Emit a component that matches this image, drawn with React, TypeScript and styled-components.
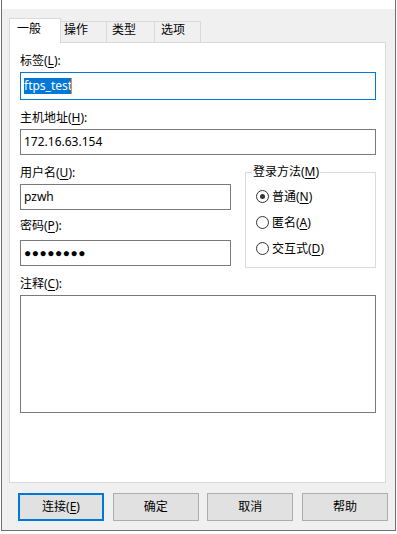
import React from "react";
import styled, { createGlobalStyle } from "styled-components";

const Global = createGlobalStyle`
  html, body { margin: 0; padding: 0; background: #ffffff; }
  body {
    font-family: "Noto Sans", "Noto Sans CJK SC", sans-serif;
    font-size: 12px;
    color: #000000;
  }
  * { box-sizing: border-box; }
  u { text-underline-offset: 2px; }
`;

const Window = styled.div`
  width: 395px;
  height: 531px;
  margin-left: 1px;
  border: 1px solid #6f6f6f;
  border-top: none;
  display: flex;
  flex-direction: column;
`;

const TitleStrip = styled.div`
  height: 9px;
  flex: none;
  background: #ffffff;
`;

const Body = styled.div`
  flex: 1;
  background: #f0f0f0;
  padding: 9px 0 0 7px;
  display: flex;
  flex-direction: column;
`;

const TabStrip = styled.div`
  display: flex;
  align-items: flex-end;
  height: 25px;
  margin-bottom: -1px;
  position: relative;
  z-index: 1;
`;

const Tab = styled.div<{ $active?: boolean; $w: number; $pl: number }>`
  width: ${(p) => p.$w}px;
  height: ${(p) => (p.$active ? 25 : 21)}px;
  margin-bottom: ${(p) => (p.$active ? 0 : 1)}px;
  padding-left: ${(p) => p.$pl}px;
  padding-top: ${(p) => (p.$active ? 2 : 0)}px;
  line-height: 16px;
  white-space: nowrap;
  background: ${(p) => (p.$active ? "#ffffff" : "#f0f0f0")};
  border: 1px solid #d9d9d9;
  border-bottom: none;
  border-left-width: ${(p) => (p.$active ? 1 : 0)}px;
`;

const Panel = styled.div`
  width: 377px;
  height: 441px;
  background: #ffffff;
  border: 1px solid #d9d9d9;
  padding: 10px 9px 0 10px;
  display: flex;
  flex-direction: column;
`;

const FieldLabel = styled.div<{ $mt?: number }>`
  line-height: 16px;
  height: 16px;
  margin-top: ${(p) => p.$mt ?? 0}px;
  white-space: nowrap;
`;

const TextBox = styled.div<{ $h: number; $mt: number; $focused?: boolean }>`
  height: ${(p) => p.$h}px;
  margin-top: ${(p) => p.$mt}px;
  border: 1px solid ${(p) => (p.$focused ? "#0078d7" : "#7a7a7a")};
  background: #ffffff;
  display: flex;
  align-items: center;
  padding-left: 3px;
  line-height: 16px;
  white-space: nowrap;
`;

const TextArea = styled.div`
  height: 118px;
  margin-top: 3px;
  border: 1px solid #7a7a7a;
  background: #ffffff;
`;

const Selection = styled.span`
  display: inline-flex;
  align-items: center;
  height: 16px;
  background: #0078d7;
  color: #ffffff;
`;

const Caret = styled.span`
  display: inline-block;
  width: 1px;
  height: 16px;
  margin-left: -1px;
  background: #ff8728;
`;

const PasswordDots = styled.span`
  font-family: "Liberation Sans", "DejaVu Sans", sans-serif;
  font-size: 12px;
  letter-spacing: 0.5px;
`;

const Columns = styled.div`
  display: grid;
  grid-template-columns: 211px 131px;
  column-gap: 14px;
  margin-top: 10px;
  align-items: start;
`;

const Column = styled.div`
  display: flex;
  flex-direction: column;
`;

const GroupBox = styled.div`
  margin-top: 7px;
  height: 96px;
  border: 1px solid #dcdcdc;
  padding-left: 10px;
  display: flex;
  flex-direction: column;
`;

const GroupTitle = styled.div`
  align-self: flex-start;
  margin: -9px 0 0 -4px;
  padding: 0 1px;
  background: #ffffff;
  line-height: 16px;
  white-space: nowrap;
`;

const RadioList = styled.div`
  margin-top: 3px;
  display: flex;
  flex-direction: column;
`;

const RadioRow = styled.div`
  display: flex;
  align-items: center;
  height: 26px;
  white-space: nowrap;
`;

const RadioCircle = styled.span<{ $checked?: boolean }>`
  width: 13px;
  height: 13px;
  border-radius: 50%;
  border: 1px solid #333333;
  background: #ffffff;
  display: inline-flex;
  align-items: center;
  justify-content: center;
  margin-right: 3px;
  flex: none;
  &::after {
    content: "";
    width: 5px;
    height: 5px;
    border-radius: 50%;
    background: #333333;
    display: ${(p) => (p.$checked ? "block" : "none")};
  }
`;

const ButtonRow = styled.div`
  display: flex;
  justify-content: space-between;
  width: 370px;
  margin: 10px 0 0 9px;
`;

const Button = styled.div<{ $default?: boolean }>`
  width: 86px;
  height: 28px;
  background: #e1e1e1;
  border: ${(p) => (p.$default ? "2px solid #0078d7" : "1px solid #adadad")};
  display: flex;
  align-items: center;
  justify-content: center;
  line-height: 16px;
  white-space: nowrap;
`;

const tabs = [
  { label: "一般", w: 52, pl: 7, active: true },
  { label: "操作", w: 46, pl: 3 },
  { label: "类型", w: 48, pl: 5 },
  { label: "选项", w: 46, pl: 6 },
];

export default function App() {
  return (
    <>
      <Global />
      <Window>
        <TitleStrip />
        <Body>
          <TabStrip>
            {tabs.map((t) => (
              <Tab key={t.label} $active={t.active} $w={t.w} $pl={t.pl}>
                {t.label}
              </Tab>
            ))}
          </TabStrip>
          <Panel>
            <FieldLabel>
              标签(<u>L</u>):
            </FieldLabel>
            <TextBox $h={28} $mt={3} $focused>
              <Selection>ftps_test</Selection>
              <Caret />
            </TextBox>

            <FieldLabel $mt={10}>
              主机地址(<u>H</u>):
            </FieldLabel>
            <TextBox $h={26} $mt={3}>
              172.16.63.154
            </TextBox>

            <Columns>
              <Column>
                <FieldLabel>
                  用户名(<u>U</u>):
                </FieldLabel>
                <TextBox $h={26} $mt={3}>
                  pzwh
                </TextBox>
                <FieldLabel $mt={8}>
                  密码(<u>P</u>):
                </FieldLabel>
                <TextBox $h={26} $mt={6}>
                  <PasswordDots>●●●●●●●●</PasswordDots>
                </TextBox>
              </Column>
              <GroupBox>
                <GroupTitle>
                  登录方法(<u>M</u>)
                </GroupTitle>
                <RadioList>
                  <RadioRow>
                    <RadioCircle $checked />
                    普通(<u>N</u>)
                  </RadioRow>
                  <RadioRow>
                    <RadioCircle />
                    匿名(<u>A</u>)
                  </RadioRow>
                  <RadioRow>
                    <RadioCircle />
                    交互式(<u>D</u>)
                  </RadioRow>
                </RadioList>
              </GroupBox>
            </Columns>

            <FieldLabel $mt={8}>
              注释(<u>C</u>):
            </FieldLabel>
            <TextArea />
          </Panel>
          <ButtonRow>
            <Button $default>
              连接(<u>E</u>)
            </Button>
            <Button>确定</Button>
            <Button>取消</Button>
            <Button>帮助</Button>
          </ButtonRow>
        </Body>
      </Window>
    </>
  );
}
